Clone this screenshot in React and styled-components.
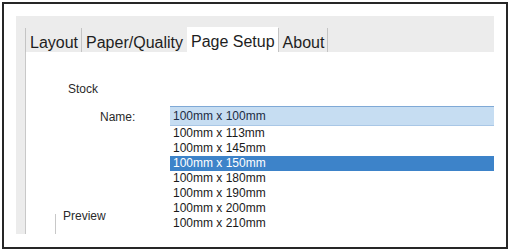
import React from "react";
import styled, { createGlobalStyle } from "styled-components";

const GlobalStyle = createGlobalStyle`
  body {
    margin: 0;
    background: #ffffff;
    font-family: "Liberation Sans", Arial, sans-serif;
  }
`;

const Page = styled.div`
  width: 511px;
  height: 252px;
  padding: 2px 3px 3px 2px;
  box-sizing: border-box;
  background: #ffffff;
`;

const Frame = styled.div`
  height: 100%;
  box-sizing: border-box;
  border: 2px solid #262626;
  padding: 12px 12px 13px 12px;
`;

const Dialog = styled.div`
  height: 100%;
  display: flex;
  flex-direction: column;
  background: #ececec;
`;

const TabStrip = styled.div`
  display: flex;
  padding: 11px 0 0 9px;
  height: 25px;
`;

const Tab = styled.div`
  height: 25px;
  box-sizing: border-box;
  padding: 4px 3px 0 4px;
  margin-top: ${(p) => (p.$active ? "0" : "1px")};
  border-left: 1px solid ${(p) => (p.$active ? "#ececec" : "#c4c4c4")};
  background: ${(p) => (p.$active ? "#ffffff" : "#ececec")};
  font-size: 16px;
  line-height: 21px;
  color: #1e1e1e;
  white-space: nowrap;
  &:last-child {
    border-right: 1px solid #c4c4c4;
  }
`;

const Body = styled.div`
  flex: 1;
  margin-left: 9px;
  border-left: 1px solid #c8c8c8;
  background: #ffffff;
  position: relative;
  display: flex;
  flex-direction: column;
  padding-top: 30px;
`;

const Heading = styled.div`
  margin-left: 42px;
  font-size: 12px;
  line-height: 14px;
  color: #2a2a2a;
`;

const FieldRow = styled.div`
  display: flex;
  align-items: center;
  margin-top: 10px;
  height: 20px;
`;

const Label = styled.div`
  width: 70px;
  margin-left: 74px;
  padding-top: 2px;
  font-size: 12px;
  color: #2a2a2a;
`;

const Combo = styled.div`
  flex: 1;
  height: 20px;
  box-sizing: border-box;
  border-top: 1px solid #7fa9d6;
  border-bottom: 1px solid #a9c7e6;
  background: #c6ddf2;
  padding-left: 3px;
  font-size: 12px;
  line-height: 19px;
  color: #1c2c44;
  position: relative;
`;

const List = styled.div`
  position: absolute;
  top: calc(100% + 1px);
  left: 0;
  right: 0;
  background: #ffffff;
  z-index: 2;
`;

const Option = styled.div`
  height: 15px;
  line-height: 15px;
  padding-left: 3px;
  font-size: 12px;
  color: ${(p) => (p.$selected ? "#ffffff" : "#1a1a1a")};
  background: ${(p) => (p.$selected ? "#3d83c9" : "transparent")};
`;

const PreviewGroup = styled.div`
  flex: 1;
  margin: 88px 0 0 29px;
  border-left: 1px solid #c8c8c8;
  padding-left: 7px;
`;

const Legend = styled.div`
  margin-top: -5px;
  font-size: 12px;
  line-height: 14px;
  color: #2a2a2a;
`;

const tabs = ["Layout", "Paper/Quality", "Page Setup", "About"];
const sizes = [113, 145, 150, 180, 190, 200, 210];

export default function App() {
  return (
    <>
      <GlobalStyle />
      <Page>
        <Frame>
          <Dialog>
            <TabStrip>
              {tabs.map((t) => (
                <Tab key={t} $active={t === "Page Setup"}>
                  {t}
                </Tab>
              ))}
            </TabStrip>
            <Body>
              <Heading>Stock</Heading>
              <FieldRow>
                <Label>Name:</Label>
                <Combo>
                  100mm x 100mm
                  <List>
                    {sizes.map((s) => (
                      <Option key={s} $selected={s === 150}>
                        100mm x {s}mm
                      </Option>
                    ))}
                  </List>
                </Combo>
              </FieldRow>
              <PreviewGroup>
                <Legend>Preview</Legend>
              </PreviewGroup>
            </Body>
          </Dialog>
        </Frame>
      </Page>
    </>
  );
}
